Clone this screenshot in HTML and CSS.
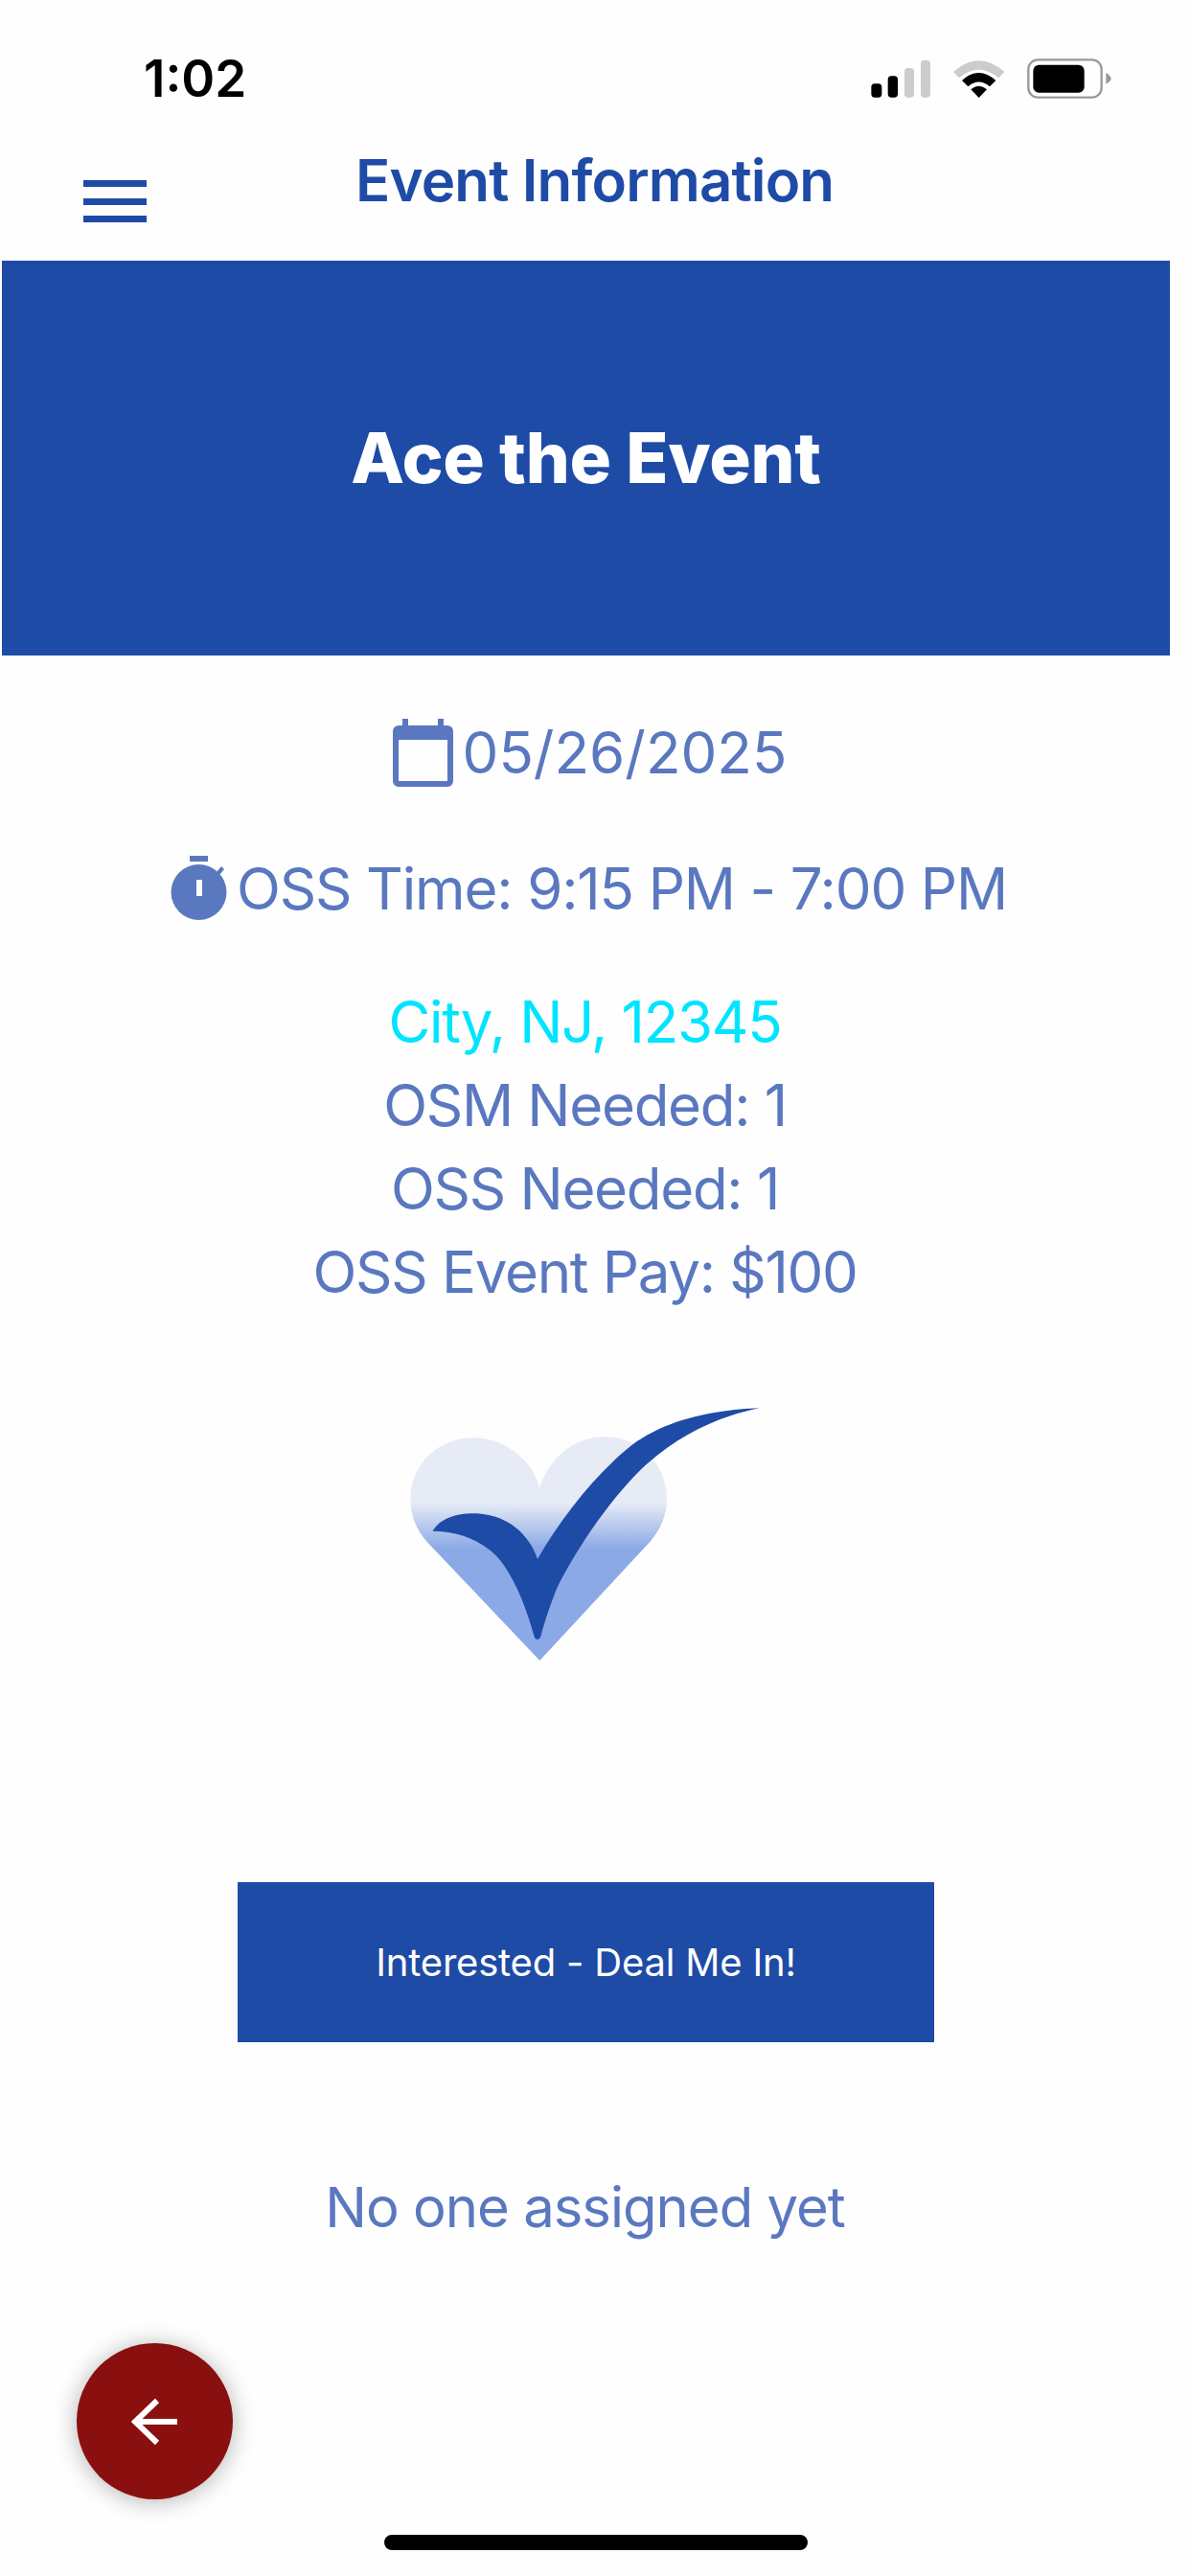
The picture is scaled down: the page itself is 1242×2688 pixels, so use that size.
FILE: index.html
```html
<!DOCTYPE html>
<html lang="en">
<head>
<meta charset="utf-8">
<title>Event Information</title>
<link rel="stylesheet" href="styles.css">
</head>
<body>
<div class="screen">
  <div class="status">
    <span class="clock">1:02</span>
    <svg class="status-icons" viewBox="0 0 900 240" aria-hidden="true">
      <rect x="85" y="142" width="33" height="43" rx="11" fill="#000"/>
      <rect x="137" y="118" width="31" height="67" rx="11" fill="#000"/>
      <rect x="189" y="93" width="30" height="92" rx="11" fill="#ccc"/>
      <rect x="240" y="68" width="30" height="117" rx="11" fill="#ccc"/>
      <path d="M342 105 Q422 35 502 105 L484 124 Q422 72 360 124Z" fill="#ccc"/>
      <path d="M369 132 Q422 84 475 132 L456 151 Q422 122 388 151Z" fill="#000"/>
      <path d="M397 160 Q422 138 447 160 L422 186Z" fill="#000"/>
      <rect x="577" y="67" width="229" height="118" rx="30" fill="none" stroke="#999" stroke-width="7"/>
      <rect x="592" y="83" width="160" height="87" rx="18" fill="#000"/>
      <path d="M820 108 Q836 118 836 126 Q836 134 820 143Z" fill="#999"/>
    </svg>
  </div>
  <header class="topbar">
    <div class="burger"><i></i><i></i><i></i></div>
    <h1 class="page-title">Event Information</h1>
  </header>
  <main class="content">
    <section class="banner"><h2>Ace the Event</h2></section>
    <div class="row date-row">
      <svg class="cal" viewBox="0 0 63 71" aria-hidden="true">
        <path fill-rule="evenodd" d="M10 0h6v7h31V0h6v7h4a6 6 0 0 1 6 6v52a6 6 0 0 1-6 6H6a6 6 0 0 1-6-6V13a6 6 0 0 1 6-6h4ZM6 22v43h51V22Z" fill="#5a78bf"/>
      </svg>
      <span>05/26/2025</span>
    </div>
    <div class="row time-row">
      <svg class="watch" viewBox="0 0 59 67" aria-hidden="true">
        <rect x="20" y="0" width="19" height="6" fill="#5a78bf"/>
        <circle cx="29.500" cy="38" r="29" fill="#5a78bf"/>
        <path d="M48 17l5-6 3 3-5 6Z" fill="#5a78bf"/>
        <rect x="27" y="25" width="6" height="17" fill="#fff"/>
      </svg>
      <span>OSS Time: 9:15 PM - 7:00 PM</span>
    </div>
    <div class="details">
      <div class="city">City, NJ, 12345</div>
      <div>OSM Needed: 1</div>
      <div>OSS Needed: 1</div>
      <div>OSS Event Pay: $100</div>
    </div>
    <svg class="logo" viewBox="0 0 1320 990" aria-hidden="true">
      <defs>
        <linearGradient id="heartFill" x1="0" y1="0" x2="0" y2="990" gradientUnits="userSpaceOnUse">
          <stop offset="0.355" stop-color="#e6ebf6"/>
          <stop offset="0.5" stop-color="#8ba9e6"/>
        </linearGradient>
      </defs>
      <path d="M487 845 L135 475 C100 435 82 390 82 340 C82 230 170 148 280 148 C380 148 465 220 487 305 C510 220 590 145 690 145 C800 145 885 230 885 340 C885 390 865 435 835 470Z" fill="url(#heartFill)"/>
      <path d="M1175 55 C1030 85 920 145 820 232 C720 325 610 480 540 620 C520 670 500 730 490 770 C485 782 473 782 470 770 C450 700 420 610 370 540 C320 475 240 440 152 440 C175 400 225 385 280 385 C375 385 450 440 480 527 C560 390 670 250 790 160 C900 85 1040 60 1175 55Z" fill="#1e4ba6"/>
    </svg>
    <button class="cta" type="button">Interested - Deal Me In!</button>
    <p class="assigned">No one assigned yet</p>
  </main>
  <button class="fab" type="button" aria-label="Back">
    <svg viewBox="0 0 50 50" aria-hidden="true">
      <path d="M48 25H4M27 3L4 25l23 22" fill="none" stroke="#fff" stroke-width="6"/>
    </svg>
  </button>
  <div class="home-bar"></div>
</div>
</body>
</html>
```
FILE: styles.css
```css
* { box-sizing: border-box; margin: 0; padding: 0; }
html, body { width: 1242px; height: 2688px; background: #fefefe; overflow: hidden; }
body { font-family: Inter, "Liberation Sans", sans-serif; }
.screen { position: relative; width: 1242px; height: 2688px; }

.status { height: 130px; display: flex; justify-content: space-between; padding: 40px 61px 0 150px; }
.clock { font-size: 53px; font-weight: 600; line-height: 84px; color: #000; height: 84px; }
.status-icons { width: 300px; height: 80px; flex: none; }

.topbar { height: 142px; display: flex; padding-left: 87px; }
.burger { width: 66px; height: 44px; margin-top: 58px; display: flex; flex-direction: column; justify-content: space-between; flex: none; }
.burger i { display: block; height: 7px; background: #1e4ba6; }
.page-title { margin-left: 218px; font-size: 60px; font-weight: 600; line-height: 60px; color: #1e4ba6; white-space: nowrap; letter-spacing: -0.85px; margin-top: 28px; }

.content { width: 1221px; display: flex; flex-direction: column; align-items: center; color: #5a78bf; font-size: 60px; }
.banner { width: 1219px; margin-left: 2px; height: 412px; background: #1e4ba6; display: flex; align-items: center; justify-content: center; }
.banner h2 { color: #fff; font-size: 72.500px; font-weight: 800; line-height: 84px; letter-spacing: -0.3px; }

.row { display: flex; align-items: center; justify-content: center; white-space: nowrap; line-height: 72px; }
.date-row { margin-top: 65px; height: 72px; gap: 10px; margin-left: 10px; }
.time-row { margin-top: 72px; height: 67px; gap: 10px; margin-left: 8px; letter-spacing: -1.15px; }
.cal { width: 63px; height: 71px; flex: none; }
.watch { width: 59px; height: 67px; flex: none; }

.details { margin-top: 63px; text-align: center; line-height: 87px; letter-spacing: -1.3px; }
.city { color: #00e5ff; }

.logo { width: 440px; height: 330px; margin-top: 80px; margin-left: 20px; flex: none; }

.cta { margin-top: 183px; margin-left: 2px; width: 727px; height: 167px; background: #1e4ba6; color: #fff; border: 0; font-family: inherit; font-size: 40px; letter-spacing: -0.2px; }
.assigned { margin-top: 137px; line-height: 70px; font-size: 58px; letter-spacing: -1px; }

.fab { position: absolute; left: 80px; top: 2445px; width: 163px; height: 163px; border-radius: 50%; border: 0; background: #8a0f0f; box-shadow: 0 2px 24px rgba(0,0,0,.3); display: flex; align-items: center; justify-content: center; }
.fab svg { width: 50px; height: 50px; }
.home-bar { position: absolute; left: 401px; top: 2645px; width: 442px; height: 16px; border-radius: 8px; background: #000; }
```
